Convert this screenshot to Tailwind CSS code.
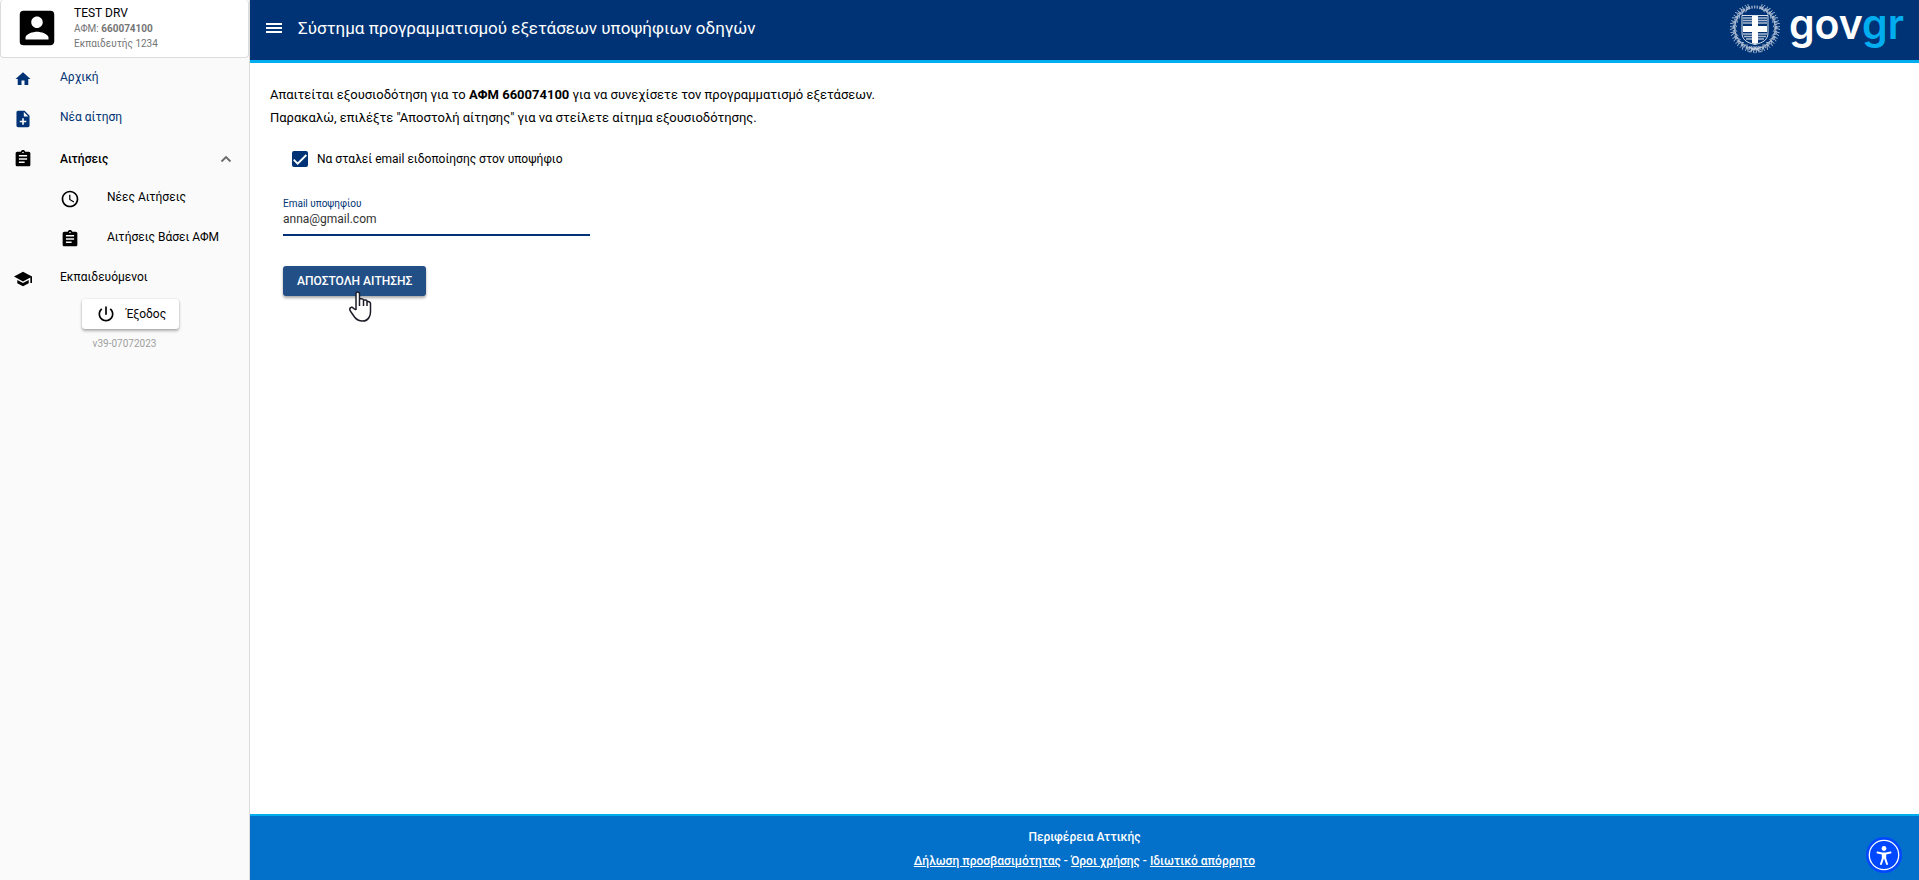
<!DOCTYPE html>
<html lang="el">
<head>
<meta charset="utf-8">
<meta name="viewport" content="width=device-width, initial-scale=1">
<title>Σύστημα προγραμματισμού εξετάσεων υποψήφιων οδηγών</title>
<script src="https://cdn.jsdelivr.net/npm/@tailwindcss/browser@4"></script>
</head>
<body class="flex min-h-screen bg-white font-['Roboto',sans-serif] text-[12px] text-black">

<aside class="flex w-[250px] shrink-0 flex-col border-r border-[#dcdcdc] bg-[#fafafa]">
  <div class="flex gap-[14px] rounded border border-t-0 border-[#dcdcdc] bg-white pt-[5px] pb-[6px] pl-[13px]">
    <svg class="size-[46px]" viewBox="0 0 24 24" aria-hidden="true"><path d="M3 5v14a2 2 0 0 0 2 2h14c1.100 0 2-.900 2-2V5a2 2 0 0 0-2-2H5a2 2 0 0 0-2 2zm12 4c0 1.660-1.340 3-3 3s-3-1.340-3-3 1.340-3 3-3 3 1.340 3 3zm-9 8c0-2 4-3.100 6-3.100s6 1.100 6 3.100v1H6v-1z"/></svg>
    <div class="text-[10px] leading-[15px] text-[#757575]">
      <p class="text-[12px] leading-4 text-black">TEST DRV</p>
      <p>ΑΦΜ: <b class="font-bold">660074100</b></p>
      <p>Εκπαιδευτής 1234</p>
    </div>
  </div>
  <nav class="pt-px">
    <ul>
      <li><a href="#" class="flex h-10 items-center gap-7 pl-[14px] text-[#003375]">
        <svg class="size-[18px]" viewBox="0 0 24 24" fill="currentColor"><path d="M10 20v-6h4v6h5v-8h3L12 3 2 12h3v8z"/></svg>
        <span class="pb-1">Αρχική</span></a></li>
      <li><a href="#" class="flex h-10 items-center gap-7 pl-[14px] text-[#003375]">
        <svg class="size-[18px]" viewBox="1 1 22 22" fill="currentColor"><path d="M14 2H6c-1.100 0-1.990.9-1.990 2L4 20c0 1.100.89 2 1.990 2H18c1.100 0 2-.9 2-2V8l-6-6zm2 14h-3v3h-2v-3H8v-2h3v-3h2v3h3v2zm-3-7V3.500L18.500 9H13z"/></svg>
        <span class="pb-1">Νέα αίτηση</span></a></li>
      <li><button type="button" aria-expanded="true" class="flex h-10 w-full items-center gap-7 pr-4 pl-[14px] text-left font-medium">
        <svg class="size-[18px]" viewBox="1 1 22 22" fill="currentColor"><path d="M19 3h-4.180C14.400 1.840 13.300 1 12 1c-1.300 0-2.400.84-2.820 2H5c-1.100 0-2 .9-2 2v14c0 1.100.9 2 2 2h14c1.100 0 2-.9 2-2V5c0-1.100-.9-2-2-2zm-7 0c.55 0 1 .45 1 1s-.45 1-1 1-1-.45-1-1 .45-1 1-1zm2 14H7v-2h7v2zm3-4H7v-2h10v2zm0-4H7V7h10v2z"/></svg>
        <span>Αιτήσεις</span>
        <svg class="ml-auto size-[14px]" viewBox="0 0 14 14" fill="none" stroke="#6b6b6b" stroke-width="1.800"><path d="M2.500 9.500 7 5l4.500 4.500"/></svg></button>
        <ul>
          <li><a href="#" class="flex h-10 items-center gap-[27px] pl-[60px]">
            <svg class="size-5" viewBox="0 0 24 24" fill="currentColor"><path d="M11.990 2C6.470 2 2 6.480 2 12s4.470 10 9.990 10C17.520 22 22 17.520 22 12S17.520 2 11.990 2zM12 20c-4.420 0-8-3.580-8-8s3.580-8 8-8 8 3.580 8 8-3.580 8-8 8zm.5-13H11v6l5.250 3.150.75-1.230-4.500-2.670z"/></svg>
            <span class="pb-1">Νέες Αιτήσεις</span></a></li>
          <li><a href="#" class="flex h-10 items-center gap-[27px] pl-[60px]">
            <svg class="mx-px size-[18px]" viewBox="1 1 22 22" fill="currentColor"><path d="M19 3h-4.180C14.400 1.840 13.300 1 12 1c-1.300 0-2.400.84-2.820 2H5c-1.100 0-2 .9-2 2v14c0 1.100.9 2 2 2h14c1.100 0 2-.9 2-2V5c0-1.100-.9-2-2-2zm-7 0c.55 0 1 .45 1 1s-.45 1-1 1-1-.45-1-1 .45-1 1-1zm2 14H7v-2h7v2zm3-4H7v-2h10v2zm0-4H7V7h10v2z"/></svg>
            <span class="pb-1">Αιτήσεις Βάσει ΑΦΜ</span></a></li>
        </ul></li>
      <li><a href="#" class="flex h-10 items-center gap-7 pl-[14px]">
        <svg class="size-[18px]" viewBox="1 1 22 22" fill="currentColor"><path d="M5 13.180v4L12 21l7-3.820v-4L12 17l-7-3.820zM12 3 1 9l11 6 9-4.910V17h2V9L12 3z"/></svg>
        <span class="pb-1">Εκπαιδευόμενοι</span></a></li>
    </ul>
  </nav>
  <div class="flex flex-col items-center gap-[7px]">
    <button type="button" class="ml-3 flex h-[30px] items-center gap-[10px] rounded-[3px] bg-white pr-[13px] pl-[14px] shadow-[0_2px_3px_rgba(0,0,0,0.3),0_0_2px_rgba(0,0,0,0.12)]">
      <svg class="size-5" viewBox="0 0 24 24" fill="currentColor"><path d="M13 3h-2v10h2V3zm4.830 2.170-1.420 1.420C17.990 7.860 19 9.810 19 12c0 3.870-3.130 7-7 7s-7-3.130-7-7c0-2.190 1.010-4.140 2.580-5.420L6.170 5.170C4.230 6.820 3 9.260 3 12c0 4.970 4.030 9 9 9s9-4.030 9-9c0-2.740-1.230-5.180-3.170-6.830z"/></svg>
      Έξοδος
    </button>
    <p class="text-[10px] leading-4 text-[#9e9e9e]">v39-07072023</p>
  </div>
</aside>

<div class="flex min-w-0 flex-1 flex-col">
  <header class="flex h-[63px] items-center border-b-3 border-[#00aeef] bg-[#003375] pr-[15px] pl-[14px] text-white">
    <button type="button" aria-label="Μενού" class="mb-1">
      <svg class="size-5" viewBox="0 0 20 20" fill="currentColor"><path d="M2 5h16v2H2zM2 9h16v2H2zM2 13h16v2H2z"/></svg>
    </button>
    <h1 class="mb-1 ml-[14px] text-[17px] leading-6">Σύστημα προγραμματισμού εξετάσεων υποψήφιων οδηγών</h1>
    <a href="#" class="ml-auto flex items-center gap-[8px]" aria-label="govgr">
      <svg class="mb-1 size-[52px]" viewBox="0 0 52 52" fill="none" aria-hidden="true">
        <defs>
          <g id="sprig" stroke="#a9bad1" stroke-width=".9" stroke-linecap="round"><path d="M26 5.500q-3-1-3.800-4M26 5.500q-3.500.3-5 2.500M26 5.500q-1.500-2-.8-4M22.500 5.800l3.500-.3"/></g>
        </defs>
        <circle cx="26" cy="26" r="21" stroke="#8fa5c3" stroke-width="3" stroke-dasharray="1.500 1.200"/>
        <use href="#sprig" transform="rotate(15 26 26) matrix(-1 0 0 1 52 0)"/><use href="#sprig" transform="rotate(29 26 26) matrix(-1 0 0 1 52 0)"/><use href="#sprig" transform="rotate(43 26 26) matrix(-1 0 0 1 52 0)"/><use href="#sprig" transform="rotate(57 26 26) matrix(-1 0 0 1 52 0)"/><use href="#sprig" transform="rotate(71 26 26) matrix(-1 0 0 1 52 0)"/><use href="#sprig" transform="rotate(85 26 26) matrix(-1 0 0 1 52 0)"/><use href="#sprig" transform="rotate(99 26 26) matrix(-1 0 0 1 52 0)"/><use href="#sprig" transform="rotate(113 26 26) matrix(-1 0 0 1 52 0)"/><use href="#sprig" transform="rotate(127 26 26) matrix(-1 0 0 1 52 0)"/><use href="#sprig" transform="rotate(141 26 26) matrix(-1 0 0 1 52 0)"/><use href="#sprig" transform="rotate(155 26 26) matrix(-1 0 0 1 52 0)"/><use href="#sprig" transform="rotate(169 26 26) matrix(-1 0 0 1 52 0)"/>
        <use href="#sprig" transform="rotate(-15 26 26)"/><use href="#sprig" transform="rotate(-29 26 26)"/><use href="#sprig" transform="rotate(-43 26 26)"/><use href="#sprig" transform="rotate(-57 26 26)"/><use href="#sprig" transform="rotate(-71 26 26)"/><use href="#sprig" transform="rotate(-85 26 26)"/><use href="#sprig" transform="rotate(-99 26 26)"/><use href="#sprig" transform="rotate(-113 26 26)"/><use href="#sprig" transform="rotate(-127 26 26)"/><use href="#sprig" transform="rotate(-141 26 26)"/><use href="#sprig" transform="rotate(-155 26 26)"/><use href="#sprig" transform="rotate(-169 26 26)"/>
        <path d="M20 50l6-4 6 4M20 45l6 3 6-3" stroke="#c5d1e1"/>
        <path d="M13 13.500h26v17c0 7-4 10-13 12-9-2-13-5-13-12z" fill="#003375" stroke="#d6dee9"/>
        <path d="M14 16h24M14 18.500h24M14 21h24M14 32h24M15 34.500h22M17 37h18" stroke="#a9bad1" stroke-width="1.300"/>
        <path d="M23 14h6v10h9v6h-9v11l-3 1-3-1V30h-9v-6h9z" fill="#fff"/>
      </svg>
      <span class="mb-3 font-['Inter',sans-serif] text-[41px] leading-10 font-semibold">gov<span class="text-[#00aeef]">gr</span></span>
    </a>
  </header>

  <main class="flex-1 px-5 pt-5">
    <p class="text-[13px] leading-[23px]">Απαιτείται εξουσιοδότηση για το <b class="font-bold">ΑΦΜ 660074100</b> για να συνεχίσετε τον προγραμματισμό εξετάσεων.<br>Παρακαλώ, επιλέξτε "Αποστολή αίτησης" για να στείλετε αίτημα εξουσιοδότησης.</p>
    <form class="pt-5 pl-[13px]">
      <div class="flex items-center gap-[9px] pl-[9px]">
        <span class="grid size-4">
          <input id="notify" type="checkbox" checked class="col-start-1 row-start-1 size-4 appearance-none rounded-[2px] bg-[#003375]">
          <svg class="pointer-events-none col-start-1 row-start-1 size-4" viewBox="0 0 24 24" fill="none" stroke="#fff" stroke-width="2.800"><path d="M2.500 13 8.500 19 21.500 6"/></svg>
        </span>
        <label for="notify" class="leading-5">Να σταλεί email ειδοποίησης στον υποψήφιο</label>
      </div>
      <div class="mt-[27px] flex w-[307px] max-w-full flex-col">
        <label for="email" class="text-[10px] leading-4 text-[#003375]">Email υποψηφίου</label>
        <input id="email" type="email" value="anna@gmail.com" class="h-6 border-b-2 border-[#003375] pb-2 text-[12px] leading-[14px] text-[#333] outline-none">
      </div>
      <div class="relative mt-[30px] w-fit">
        <button type="button" class="h-[30px] rounded-[3px] bg-[#224f86] px-[14px] font-medium text-white shadow-[0_2px_3px_rgba(0,0,0,0.35)]">ΑΠΟΣΤΟΛΗ ΑΙΤΗΣΗΣ</button>
        <svg class="pointer-events-none absolute top-[25px] left-[65px] h-[31px] w-6" viewBox="0 0 24 31" fill="#fff" stroke="#1c1c28" stroke-width="1.500" stroke-linejoin="round" aria-hidden="true"><path d="M8 19V2.500Q8 1 9.500 1T11.500 2.500V12V9q0-1.500 2-1.200T15.500 9v4V10q.2-1.500 2-1T19 10.500V14v-2.500q.5-1.500 2-.8t1.500 1.800V21q0 3-1.500 5.500-2 3.500-6.500 3.500-5 0-8-4L3 21q-2-2.500-.8-4 1.500-1.500 3.300.3L8 19M11.500 9v6M15.500 10v5M19 11v4"/></svg>
      </div>
    </form>
  </main>

  <footer class="relative border-t-2 border-[#00aeef] bg-[#0370c9] pt-[9px] pb-[7px] text-center leading-6 font-medium text-white">
    <p>Περιφέρεια Αττικής</p>
    <p><a href="#" class="underline">Δήλωση προσβασιμότητας</a> - <a href="#" class="underline">Όροι χρήσης</a> - <a href="#" class="underline">Ιδιωτικό απόρρητο</a></p>
    <button type="button" aria-label="Προσβασιμότητα" class="absolute right-[17px] bottom-[7px]">
      <svg class="size-9" viewBox="0 0 36 36"><circle cx="18" cy="18" r="18" fill="#0048ff"/><circle cx="18" cy="18" r="14.700" fill="none" stroke="#fff" stroke-width="1.300"/><circle cx="18" cy="11.500" r="2.400" fill="#fff"/><path d="M11.500 15.500 16 16.500h4l4.500-1M18 17v4M16.800 16.500v5L15 27M19.200 16.500v5L21 27" fill="none" stroke="#fff" stroke-width="2" stroke-linecap="round"/></svg>
    </button>
  </footer>
</div>
</body>
</html>
